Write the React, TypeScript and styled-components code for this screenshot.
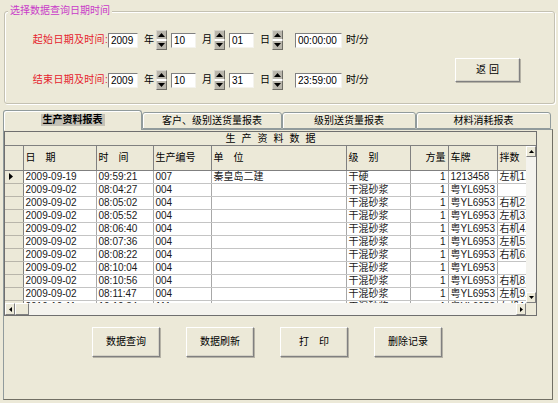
import React from 'react';
import styled, { createGlobalStyle, css } from 'styled-components';

const GlobalStyle = createGlobalStyle`
  html, body {
    margin: 0;
    padding: 0;
    background: #ECE9D8;
  }

  body {
    font-family: "Liberation Sans", "Noto Sans CJK SC", sans-serif;
    font-size: 10px;
    color: #000;
  }

  * {
    box-sizing: border-box;
  }
`;

const Face = '#ECE9D8';
const Shadow = '#808080';

const raised = css`
  background: ${Face};
  border-top: 1px solid #fff;
  border-left: 1px solid #fff;
  border-right: 1px solid ${Shadow};
  border-bottom: 1px solid ${Shadow};
`;

const Window = styled.div`
  width: 558px;
  height: 403px;
  overflow: hidden;
  background: ${Face};
  padding-top: 11px;
  display: flex;
  flex-direction: column;
`;

/* ---------- query group ---------- */

const GroupBox = styled.div`
  position: relative;
  display: flex;
  align-items: flex-start;
  height: 93px;
  margin: 0 3px 0 4px;
  padding: 18px 34px 0 27px;
  border: 1px solid #C4C1B2;
  border-radius: 3px;
  box-shadow: inset 1px 1px 0 #fff, 1px 1px 0 #fff;
`;

const Legend = styled.span`
  position: absolute;
  top: -7px;
  left: 3px;
  padding: 0 2px;
  background: ${Face};
  color: #C93BC9;
  line-height: 12px;
  white-space: nowrap;
`;

const DateRows = styled.div`
  display: flex;
  flex-direction: column;
  gap: 20px;
`;

const DateRow = styled.div`
  display: flex;
  align-items: center;
  height: 20px;
`;

const RowLabel = styled.span`
  width: 76px;
  text-align: right;
  color: #E6222C;
  letter-spacing: 0.3px;
  line-height: 12px;
  white-space: nowrap;
`;

const Field = styled.div<{ $w: number; $gap?: number }>`
  width: ${(p) => p.$w}px;
  height: 15px;
  margin-left: ${(p) => p.$gap ?? 0}px;
  padding-left: 2px;
  background: #fff;
  border-top: 1px solid ${Shadow};
  border-left: 1px solid ${Shadow};
  border-right: 1px solid #F4F3EE;
  border-bottom: 1px solid #F4F3EE;
  line-height: 13px;
  white-space: nowrap;
`;

const Unit = styled.span<{ $gap?: number }>`
  margin-left: ${(p) => p.$gap ?? 6}px;
  line-height: 12px;
  white-space: nowrap;
`;

const SpinBox = styled.div`
  display: flex;
  flex-direction: column;
  width: 11px;
  height: 20px;
  margin-left: 2px;
`;

const SpinHalf = styled.div<{ $down?: boolean }>`
  display: flex;
  align-items: ${(p) => (p.$down ? 'flex-start' : 'flex-end')};
  justify-content: center;
  height: 10px;
  padding: ${(p) => (p.$down ? '2px 0 0' : '0 0 2px')};
  background: #B9B6AC;
  border-top: 1px solid ${(p) => (p.$down ? '#fff' : '#D8D6CE')};
  border-bottom: 1px solid ${(p) => (p.$down ? '#6E6D66' : '#fff')};
  border-left: 1px solid #D8D6CE;
  border-right: 1px solid #6E6D66;
`;

const Spinner: React.FC = () => (
  <SpinBox>
    <SpinHalf>
      <svg width="7" height="4" viewBox="0 0 7 4">
        <path d="M3.5 0L7 4H0z" fill="#000" />
      </svg>
    </SpinHalf>
    <SpinHalf $down>
      <svg width="7" height="4" viewBox="0 0 7 4">
        <path d="M0 0H7L3.5 4z" fill="#000" />
      </svg>
    </SpinHalf>
  </SpinBox>
);

const Button = styled.div<{ $w: number; $h: number }>`
  display: flex;
  align-items: center;
  justify-content: center;
  width: ${(p) => p.$w}px;
  height: ${(p) => p.$h}px;
  ${raised};
  box-shadow: 1px 1px 0 #B5B2A6, inset -1px -1px 0 #D5D2C6;
  line-height: 12px;
  white-space: pre;
`;

const ReturnButton = styled(Button)`
  margin: 28px 0 0 auto;
`;

interface DateRowProps {
  label: string;
  year: string;
  month: string;
  day: string;
  time: string;
}

const DateTimeRow: React.FC<DateRowProps> = ({ label, year, month, day, time }) => (
  <DateRow>
    <RowLabel>{label}</RowLabel>
    <Field $w={30}>{year}</Field>
    <Unit>年</Unit>
    <Spinner />
    <Field $w={25} $gap={4}>{month}</Field>
    <Unit>月</Unit>
    <Spinner />
    <Field $w={25} $gap={4}>{day}</Field>
    <Unit>日</Unit>
    <Spinner />
    <Field $w={47} $gap={12}>{time}</Field>
    <Unit $gap={4}>时/分</Unit>
  </DateRow>
);

/* ---------- tabs ---------- */

const TabStrip = styled.div`
  display: flex;
  align-items: flex-end;
  height: 19px;
  margin: 6px 0 0 3px;
  position: relative;
  z-index: 1;
`;

const Tab = styled.div<{ $w: number; $active?: boolean }>`
  display: flex;
  align-items: center;
  justify-content: center;
  width: ${(p) => p.$w}px;
  height: ${(p) => (p.$active ? 20 : 17)}px;
  margin-bottom: ${(p) => (p.$active ? -1 : 0)}px;
  padding-bottom: ${(p) => (p.$active ? 2 : 0)}px;
  background: ${Face};
  border: 1px solid #919B9C;
  border-bottom: ${(p) => (p.$active ? 'none' : '1px solid #919B9C')};
  border-radius: 3px 3px 0 0;
  box-shadow: inset 1px 1px 0 #fff;
  line-height: 12px;
  white-space: nowrap;
`;

const ActiveTabText = styled.span`
  padding: 0 2px;
  font-weight: bold;
  background: #C4C1B6;
`;

const Panel = styled.div`
  flex: 1;
  margin: 0 5px 3px 3px;
  padding-top: 1px;
  border: 1px solid #919B9C;
  border-right-color: #716F64;
  border-bottom-color: #716F64;
  display: flex;
  flex-direction: column;
`;

/* ---------- grid ---------- */

const Grid = styled.div`
  display: flex;
  flex-direction: column;
  width: 533px;
  height: 185px;
  border: 1px solid #6F6F6F;
  background: ${Face};
`;

const GridCaption = styled.div`
  height: 14px;
  border-bottom: 1px solid ${Shadow};
  text-align: center;
  letter-spacing: 6px;
  padding-left: 6px;
  line-height: 13px;
`;

const GridBody = styled.div`
  display: flex;
  height: 157px;
`;

const DataArea = styled.div`
  width: 521px;
  overflow: hidden;
  background: #fff;
`;

const Table = styled.table`
  table-layout: fixed;
  border-collapse: collapse;
  width: 552px;
`;

const HeadCell = styled.th<{ $right?: boolean }>`
  height: 24px;
  padding: 0 ${(p) => (p.$right ? 2 : 0)}px 0 2px;
  background: ${Face};
  border-right: 1px solid ${Shadow};
  border-bottom: 1px solid ${Shadow};
  font-weight: normal;
  text-align: ${(p) => (p.$right ? 'right' : 'left')};
  line-height: 12px;
  white-space: pre;
  overflow: hidden;
`;

const Cell = styled.td<{ $right?: boolean }>`
  height: 13px;
  padding: 0 ${(p) => (p.$right ? 2 : 0)}px 0 2px;
  border-right: 1px solid #A8A8A8;
  border-bottom: 1px solid #C4C4C4;
  text-align: ${(p) => (p.$right ? 'right' : 'left')};
  color: #1A1A1A;
  line-height: 11px;
  white-space: nowrap;
  overflow: hidden;
`;

const IndicatorCell = styled.td`
  height: 13px;
  padding: 0 0 0 4px;
  background: ${Face};
  border-right: 1px solid ${Shadow};
  border-bottom: 1px solid #B8B5AA;
  line-height: 8px;
`;

const VScroll = styled.div`
  display: flex;
  flex-direction: column;
  width: 10px;
  background: #F4F3EE;
`;

const ScrollArrow = styled.div<{ $w: number; $h: number }>`
  display: flex;
  align-items: center;
  justify-content: center;
  flex-shrink: 0;
  width: ${(p) => p.$w}px;
  height: ${(p) => p.$h}px;
  ${raised};
`;

const Track = styled.div`
  flex: 1;
`;

const HScrollRow = styled.div`
  display: flex;
  height: 12px;
`;

const HScroll = styled.div`
  display: flex;
  width: 521px;
  background: #F4F3EE;
`;

const Thumb = styled.div`
  width: 14px;
  ${raised};
`;

const Corner = styled.div`
  width: 10px;
  background: ${Face};
`;

const Arrow: React.FC<{ dir: 'up' | 'down' | 'left' | 'right' }> = ({ dir }) => {
  const d = {
    up: 'M2.5 0L5 3H0z',
    down: 'M0 0H5L2.5 3z',
    left: 'M0 2.5L3 0V5z',
    right: 'M0 0L3 2.5L0 5z',
  }[dir];
  const vertical = dir === 'up' || dir === 'down';
  return (
    <svg width={vertical ? 5 : 3} height={vertical ? 3 : 5} viewBox={vertical ? '0 0 5 3' : '0 0 3 5'}>
      <path d={d} fill="#000" />
    </svg>
  );
};

/* ---------- bottom buttons ---------- */

const ActionBar = styled.div`
  display: flex;
  gap: 26px;
  margin-top: 11px;
  padding-left: 88px;
`;

const columns = [
  { label: '', width: 18 },
  { label: '日　期', width: 73 },
  { label: '时　间', width: 57 },
  { label: '生产编号', width: 58 },
  { label: '单　位', width: 135 },
  { label: '级　别', width: 64 },
  { label: '方量', width: 38, right: true },
  { label: '车牌', width: 49 },
  { label: '拌数', width: 60 },
];

const rows: string[][] = [
  ['2009-09-19', '09:59:21', '007', '秦皇岛二建', '干硬', '1', '1213458', '左机1.5'],
  ['2009-09-02', '08:04:27', '004', '', '干混砂浆', '1', '粤YL6953', ''],
  ['2009-09-02', '08:05:02', '004', '', '干混砂浆', '1', '粤YL6953', '右机2.5'],
  ['2009-09-02', '08:05:52', '004', '', '干混砂浆', '1', '粤YL6953', '左机3.5'],
  ['2009-09-02', '08:06:40', '004', '', '干混砂浆', '1', '粤YL6953', '右机4.5'],
  ['2009-09-02', '08:07:36', '004', '', '干混砂浆', '1', '粤YL6953', '左机5.5'],
  ['2009-09-02', '08:08:22', '004', '', '干混砂浆', '1', '粤YL6953', '右机6.5'],
  ['2009-09-02', '08:10:04', '004', '', '干混砂浆', '1', '粤YL6953', ''],
  ['2009-09-02', '08:10:56', '004', '', '干混砂浆', '1', '粤YL6953', '右机8.5'],
  ['2009-09-02', '08:11:47', '004', '', '干混砂浆', '1', '粤YL6953', '左机9.5'],
  ['2010-10-11', '10:10:34', '111', '', '干混砂浆', '1', '粤YL6953', '左机1.5'],
];

const tabs = [
  { label: '生产资料报表', width: 139 },
  { label: '客户、级别送货量报表', width: 140 },
  { label: '级别送货量报表', width: 134 },
  { label: '材料消耗报表', width: 135 },
];

const actions = ['数据查询', '数据刷新', '打　印', '删除记录'];

const App: React.FC = () => (
  <>
    <GlobalStyle />
    <Window>
      <GroupBox>
        <Legend>选择数据查询日期时间</Legend>
        <DateRows>
          <DateTimeRow label="起始日期及时间:" year="2009" month="10" day="01" time="00:00:00" />
          <DateTimeRow label="结束日期及时间:" year="2009" month="10" day="31" time="23:59:00" />
        </DateRows>
        <ReturnButton $w={65} $h={24}>返 回</ReturnButton>
      </GroupBox>

      <TabStrip>
        {tabs.map((t, i) => (
          <Tab key={t.label} $w={t.width} $active={i === 0}>
            {i === 0 ? <ActiveTabText>{t.label}</ActiveTabText> : t.label}
          </Tab>
        ))}
      </TabStrip>

      <Panel>
        <Grid>
          <GridCaption>生产资料数据</GridCaption>
          <GridBody>
            <DataArea>
              <Table>
                <colgroup>
                  {columns.map((c, i) => (
                    <col key={i} style={{ width: c.width }} />
                  ))}
                </colgroup>
                <thead>
                  <tr>
                    {columns.map((c, i) => (
                      <HeadCell key={i} $right={c.right}>
                        {c.label}
                      </HeadCell>
                    ))}
                  </tr>
                </thead>
                <tbody>
                  {rows.map((r, ri) => (
                    <tr key={ri}>
                      <IndicatorCell>
                        {ri === 0 && (
                          <svg width="4" height="7" viewBox="0 0 4 7">
                            <path d="M0 0L4 3.5L0 7z" fill="#000" />
                          </svg>
                        )}
                      </IndicatorCell>
                      {r.map((v, ci) => (
                        <Cell key={ci} $right={ci === 5}>
                          {v}
                        </Cell>
                      ))}
                    </tr>
                  ))}
                </tbody>
              </Table>
            </DataArea>
            <VScroll>
              <ScrollArrow $w={10} $h={11}>
                <Arrow dir="up" />
              </ScrollArrow>
              <Track />
              <ScrollArrow $w={10} $h={11}>
                <Arrow dir="down" />
              </ScrollArrow>
            </VScroll>
          </GridBody>
          <HScrollRow>
            <HScroll>
              <ScrollArrow $w={10} $h={12}>
                <Arrow dir="left" />
              </ScrollArrow>
              <Thumb />
              <Track />
              <ScrollArrow $w={10} $h={12}>
                <Arrow dir="right" />
              </ScrollArrow>
            </HScroll>
            <Corner />
          </HScrollRow>
        </Grid>

        <ActionBar>
          {actions.map((a) => (
            <Button key={a} $w={68} $h={30}>
              {a}
            </Button>
          ))}
        </ActionBar>
      </Panel>
    </Window>
  </>
);

export default App;
